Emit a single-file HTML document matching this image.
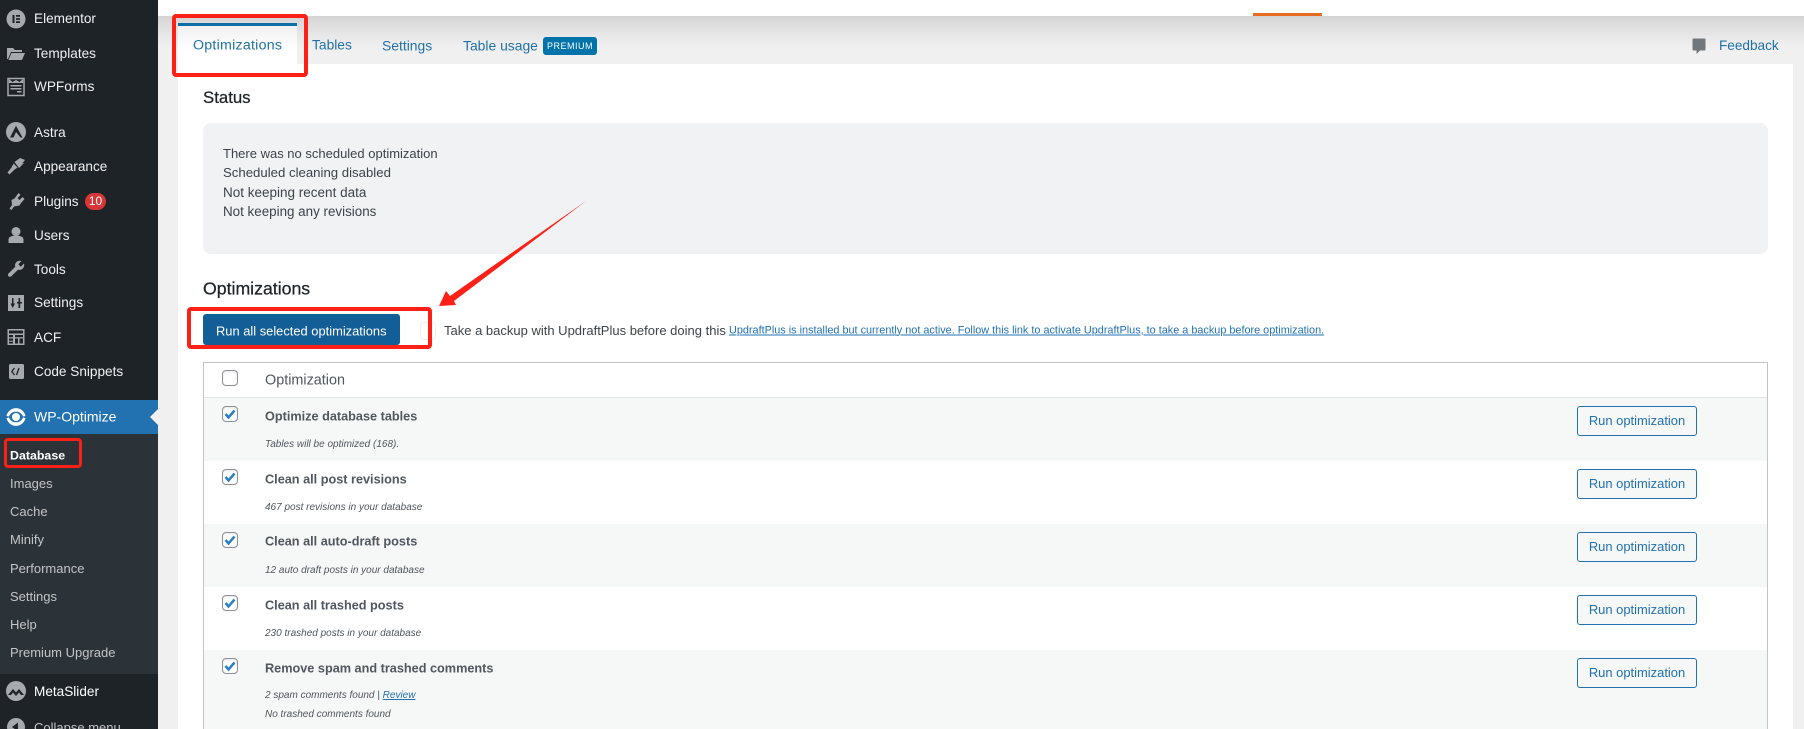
<!DOCTYPE html>
<html lang="en">
<head>
<meta charset="utf-8">
<title>WP-Optimize Database</title>
<style>
html,body{margin:0;padding:0;width:1804px;height:729px;overflow:hidden;background:#f0f0f1;}
body{position:relative;font-family:"Liberation Sans",Arial,sans-serif;font-size:14px;color:#3c434a;}
.a{position:absolute;}
.t{position:absolute;white-space:nowrap;transform:translateY(-50%);line-height:1.2;}
#side{position:absolute;left:0;top:0;width:158px;height:729px;background:#1d2327;}
#sub{position:absolute;left:0;top:434px;width:158px;height:240px;background:#2c3338;}
#cur{position:absolute;left:0;top:400px;width:158px;height:34px;background:#2271b1;}
#cur:after{content:"";position:absolute;right:0;top:9px;border:8px solid transparent;border-right-color:#f0f0f1;border-left:0;}
.m{color:#f0f0f1;font-size:13.6px;left:34px;margin-top:1px;}
.s{color:#c3c4c7;font-size:13px;left:10px;margin-top:1px;}
.i{position:absolute;left:6px;width:20px;height:20px;}
.tab{color:#2271a5;font-size:13.9px;top:46px;font-weight:400;}
.h{font-size:17.6px;color:#1d2327;left:203px;font-weight:400;-webkit-text-stroke:.25px #1d2327;}
.st{left:223px;font-size:13.2px;color:#3c434a;margin-top:1px;}
.row{position:absolute;left:204px;width:1563px;height:63px;}
.g{background:#f6f7f7;}
.cb{position:absolute;left:222px;width:14px;height:14px;border:1px solid #8c8f94;border-radius:4px;background:#fff;box-shadow:inset 0 1px 2px rgba(0,0,0,.1);}
.cb svg{position:absolute;left:-1px;top:-1px;width:16px;height:16px;}
.ti{left:265px;font-size:12.7px;font-weight:700;color:#50575e;}
.de{left:265px;font-size:10px;font-style:italic;color:#50575e;margin-top:1px;}
.btn{position:absolute;left:1577px;width:118px;height:28px;border:1px solid #2271b1;border-radius:3px;background:#f6f7f7;color:#2271b1;font-size:12.95px;line-height:28px;text-align:center;}
.red{position:absolute;box-sizing:border-box;border:4px solid #fb2116;border-radius:4px;}
</style>
</head>
<body>
<div id="side"></div>
<div id="sub"></div>
<div id="cur"></div>

<!-- sidebar icons -->
<svg class="i" style="top:9px" viewBox="0 0 20 20"><circle cx="10" cy="10" r="9.500" fill="#a7aaad"/><path d="M6.500 6h2v8h-2zM10 6h4v1.800h-4zM10 9.100h4v1.800h-4zM10 12.200h4V14h-4z" fill="#1d2327"/></svg>
<svg class="i" style="top:43px" viewBox="0 0 20 20"><path d="M1 5h6l2 2h7v2H5L2 16H1zM5.500 10H19l-3 7H2.500z" fill="#a7aaad"/></svg>
<svg class="i" style="top:77px" viewBox="0 0 20 20"><path d="M2 1.500h16v17H2z" fill="none" stroke="#a7aaad" stroke-width="1.500"/><path d="M3 2l3.500 3L10 3l3.500 2L17 2v4H3z" fill="#a7aaad"/><path d="M4.500 8h11v1.500h-11zM4.500 11h11v1.500h-11zM11 14h4.500v1.500H11z" fill="#a7aaad"/></svg>
<svg class="i" style="top:122px" viewBox="0 0 20 20"><circle cx="10" cy="10" r="10" fill="#a7aaad"/><path d="M10 3.800L4 15.500h3.500L10 10l4.500 5.500h2z" fill="#1d2327"/></svg>
<svg class="i" style="top:156px" viewBox="0 0 20 20"><path d="M8.500 6L14 2l5 2-3 3.500 2.500-1L13 12zM7.500 7.500l4 4L8 14l-4.500 4.500-2-2L5.500 11.500z" fill="#a7aaad"/></svg>
<svg class="i" style="top:191px" viewBox="0 0 20 20"><path d="M12.500 2l2 2-3 3 2 2 3-3 2 2-3.500 4-1.500 2.500-5.500 1-2.500 3.500-2-1.500 2.500-3.500-.5-5 3-1.500z" fill="#a7aaad"/></svg>
<svg class="i" style="top:225px" viewBox="0 0 20 20"><circle cx="10" cy="6.500" r="4.500" fill="#a7aaad"/><path d="M2.500 18v-3.500c0-2.500 3-4 7.500-4s7.500 1.500 7.500 4V18z" fill="#a7aaad"/></svg>
<svg class="i" style="top:259px" viewBox="0 0 20 20"><path d="M18 4.500l-3.200 3.200-2.500-2.500L15.500 2c-2.500-.8-5 .2-6 2.200-.7 1.300-.5 2.600-.2 3.500L2.500 14.500c-.9 1-.7 2 0 2.800.8.700 1.800.9 2.800 0L12 10.700c1 .3 2.300.4 3.600-.3 2-1.100 3.200-3.500 2.400-5.900z" fill="#a7aaad"/></svg>
<svg class="i" style="top:293px" viewBox="0 0 20 20"><path d="M2 2h16v16H2z" fill="#a7aaad"/><path d="M6 5h1.500v5.500H9L6.700 15 4.500 10.500H6zM12.500 5h1.500l.2 4H16v1.500h-1.800V15h-1.700v-4.500H11V9h1.500z" fill="#1d2327"/></svg>
<svg class="i" style="top:327px" viewBox="0 0 20 20"><path d="M1.500 2h17v16h-17z" fill="#a7aaad"/><path d="M3 3.500h14v3H3zM3 8h4v2.200H3zM9 8h8v2.200H9zM3 11.500h4v2.200H3zM9 11.500h3v5H9zM3 14.800h4v1.700H3zM13.500 11.500H17v5h-3.500z" fill="#1d2327"/></svg>
<svg class="i" style="top:362px" viewBox="0 0 20 20"><rect x="3" y="2" width="15" height="15" rx="1.500" fill="#a7aaad"/><path d="M8.500 6L5.800 9.500l2.700 3.500M10.500 13l2.500-7" fill="none" stroke="#1d2327" stroke-width="1.300"/></svg>
<svg class="i" style="top:407px" viewBox="0 0 20 20"><path d="M.5 9C3 -1.500 17 -1.500 19.500 9L17 9.500C14.500 3 5.500 3 3 9.500zM.5 11C3 21.500 17 21.500 19.500 11L17 10.500C14.500 17 5.500 17 3 10.500z" fill="#fff"/><circle cx="10" cy="10" r="4" fill="#fff"/></svg>
<svg class="i" style="top:681px" viewBox="0 0 20 20"><circle cx="10" cy="10" r="10" fill="#a7aaad"/><path d="M2 14l5-6 3 3.500L13 8l5 6h-3l-2-2.500L10 15 7 11.500 5 14z" fill="#1d2327"/></svg>
<svg class="i" style="top:717px" viewBox="0 0 20 20"><circle cx="10" cy="10" r="9" fill="#a7aaad"/><path d="M12 5.500v9L6 10z" fill="#1d2327"/></svg>

<!-- sidebar labels -->
<span class="t m" style="top:18px">Elementor</span>
<span class="t m" style="top:53px">Templates</span>
<span class="t m" style="top:86px">WPForms</span>
<span class="t m" style="top:132px">Astra</span>
<span class="t m" style="top:166px">Appearance</span>
<span class="t m" style="top:201px">Plugins</span>
<div class="a" style="left:85px;top:193px;width:21px;height:17px;border-radius:9px;background:#d63638;color:#fff;font-size:12px;line-height:17px;text-align:center">10</div>
<span class="t m" style="top:235px">Users</span>
<span class="t m" style="top:269px">Tools</span>
<span class="t m" style="top:302px">Settings</span>
<span class="t m" style="top:337px">ACF</span>
<span class="t m" style="top:371px">Code Snippets</span>
<span class="t m" style="top:416px;color:#fff;font-size:14px">WP-Optimize</span>
<span class="t s" style="top:455px;color:#fff;font-weight:700;font-size:12.4px">Database</span>
<span class="t s" style="top:483px">Images</span>
<span class="t s" style="top:511px">Cache</span>
<span class="t s" style="top:539px">Minify</span>
<span class="t s" style="top:568px">Performance</span>
<span class="t s" style="top:596px">Settings</span>
<span class="t s" style="top:624px">Help</span>
<span class="t s" style="top:652px">Premium Upgrade</span>
<span class="t m" style="top:691px;color:#fff">MetaSlider</span>
<span class="t m" style="top:727px;color:#c3c4c7;font-size:13px">Collapse menu</span>

<!-- top bar and shadow -->
<div class="a" style="left:158px;top:0;width:1646px;height:16px;background:#fff"></div>
<div class="a" style="left:158px;top:16px;width:1646px;height:34px;background:linear-gradient(#d3d3d3,#e4e4e4 45%,#eeeeef 85%,#f0f0f1)"></div>
<div class="a" style="left:1253px;top:13px;width:69px;height:3px;background:#e76d23"></div>

<!-- tab strip -->
<div class="a" style="left:178px;top:23px;width:119px;height:41px;background:linear-gradient(#f1f1f1,#fff 65%);border-top:3px solid #0f6ea5;box-sizing:border-box"></div>
<div class="a" style="left:178px;top:64px;width:1615px;height:665px;background:#fff"></div>
<span class="t tab" style="left:193px;font-size:14.2px;letter-spacing:.25px">Optimizations</span>
<span class="t tab" style="left:312px;font-size:13.8px">Tables</span>
<span class="t tab" style="left:382px">Settings</span>
<span class="t tab" style="left:463px">Table usage</span>
<div class="a" style="left:543px;top:37px;width:54px;height:18px;border-radius:3px;background:#0073aa;color:#fff;font-size:9px;line-height:19px;text-align:center;letter-spacing:.5px">PREMIUM</div>
<svg class="a" style="left:1692px;top:38px;width:14px;height:17px" viewBox="0 0 14 17"><path d="M1.500 0.500h11a1 1 0 0 1 1 1v10a1 1 0 0 1-1 1H8L4.500 16v-3.500h-3a1 1 0 0 1-1-1v-10a1 1 0 0 1 1-1z" fill="#72777c"/></svg>
<span class="t tab" style="left:1719px;font-size:13.6px">Feedback</span>

<!-- status -->
<span class="t h" style="top:98px;font-size:16.8px">Status</span>
<div class="a" style="left:203px;top:123px;width:1565px;height:131px;border-radius:8px;background:#f1f2f4"></div>
<span class="t st" style="top:153px;font-size:13px">There was no scheduled optimization</span>
<span class="t st" style="top:172px">Scheduled cleaning disabled</span>
<span class="t st" style="top:192px;font-size:13.5px">Not keeping recent data</span>
<span class="t st" style="top:211px;font-size:13.4px">Not keeping any revisions</span>

<!-- optimizations head -->
<span class="t h" style="top:289px;font-size:17.7px">Optimizations</span>
<div class="a" style="left:203px;top:314px;width:197px;height:31px;border-radius:3px;background:#135e96"></div>
<span class="t" style="left:216px;top:331px;color:#fff;font-size:12.9px">Run all selected optimizations</span>
<div class="a" style="left:420px;top:322px;width:14px;height:16px;border:1px solid #eee;border-radius:4px"></div>
<span class="t" style="left:444px;top:331px;font-size:13px;color:#3c434a">Take a backup with UpdraftPlus before doing this</span>
<span class="t" style="left:729px;top:330.500px;font-size:10.86px;color:#2271b1;text-decoration:underline">UpdraftPlus is installed but currently not active. Follow this link to activate UpdraftPlus, to take a backup before optimization.</span>

<!-- table -->
<div class="a" style="left:203px;top:362px;width:1565px;height:367px;box-sizing:border-box;border:1px solid #c3c4c7;border-bottom:0;background:#fff"></div>
<div class="a" style="left:204px;top:397px;width:1563px;height:1px;background:#e2e4e7"></div>
<div class="row g" style="top:398px"></div>
<div class="row g" style="top:524px"></div>
<div class="row g" style="top:650px;height:79px"></div>

<div class="cb" style="top:370px"></div>
<span class="t" style="left:265px;top:381px;font-size:14.4px;color:#50575e">Optimization</span>

<div class="cb" style="top:406px"><svg viewBox="0 0 16 16"><path d="M3.500 8l3 3.500 6-7" fill="none" stroke="#2d7fc4" stroke-width="2.500"/></svg></div>
<span class="t ti" style="top:416.500px">Optimize database tables</span>
<span class="t de" style="top:444px">Tables will be optimized (168).</span>
<div class="btn" style="top:406px">Run optimization</div>

<div class="cb" style="top:469px"><svg viewBox="0 0 16 16"><path d="M3.500 8l3 3.500 6-7" fill="none" stroke="#2d7fc4" stroke-width="2.500"/></svg></div>
<span class="t ti" style="top:479.500px">Clean all post revisions</span>
<span class="t de" style="top:507px">467 post revisions in your database</span>
<div class="btn" style="top:469px">Run optimization</div>

<div class="cb" style="top:532px"><svg viewBox="0 0 16 16"><path d="M3.500 8l3 3.500 6-7" fill="none" stroke="#2d7fc4" stroke-width="2.500"/></svg></div>
<span class="t ti" style="top:542px">Clean all auto-draft posts</span>
<span class="t de" style="top:570px">12 auto draft posts in your database</span>
<div class="btn" style="top:532px">Run optimization</div>

<div class="cb" style="top:595px"><svg viewBox="0 0 16 16"><path d="M3.500 8l3 3.500 6-7" fill="none" stroke="#2d7fc4" stroke-width="2.500"/></svg></div>
<span class="t ti" style="top:605.500px">Clean all trashed posts</span>
<span class="t de" style="top:632.500px">230 trashed posts in your database</span>
<div class="btn" style="top:595px">Run optimization</div>

<div class="cb" style="top:658px"><svg viewBox="0 0 16 16"><path d="M3.500 8l3 3.500 6-7" fill="none" stroke="#2d7fc4" stroke-width="2.500"/></svg></div>
<span class="t ti" style="top:668.500px">Remove spam and trashed comments</span>
<span class="t de" style="top:695px">2 spam comments found | <span style="color:#2271b1;text-decoration:underline">Review</span></span>
<span class="t de" style="top:714px">No trashed comments found</span>
<div class="btn" style="top:658px">Run optimization</div>

<!-- annotations -->
<div class="red" style="left:172px;top:14px;width:136px;height:63px"></div>
<div class="red" style="left:187px;top:307px;width:245px;height:42px"></div>
<div class="red" style="left:4px;top:438px;width:78px;height:30px;border-width:3.500px"></div>
<svg class="a" style="left:0;top:0;pointer-events:none" width="1804" height="729"><polygon points="439,306 446,291 450,296 586,201 454,301 456,305" fill="#fb2116"/></svg>
</body>
</html>
